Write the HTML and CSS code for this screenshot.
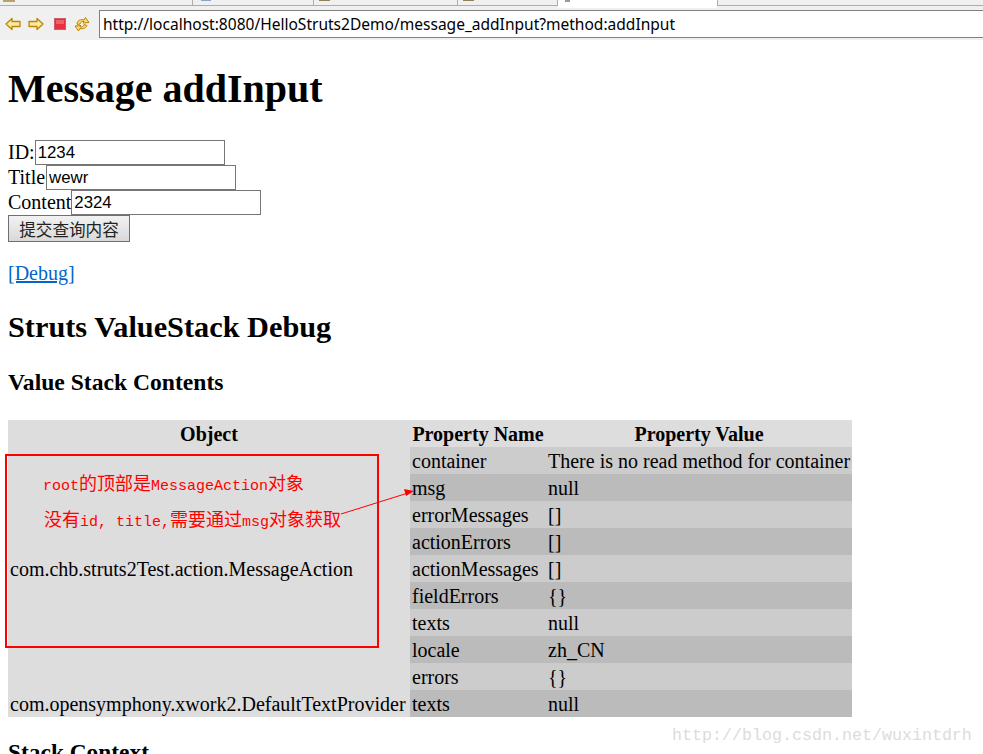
FILE: index.html
```html
<!DOCTYPE html>
<html lang="en">
<head>
<meta charset="utf-8">
<title>Message addInput</title>
<link rel="stylesheet" href="styles.css">
</head>
<body>
<header class="chrome">
  <div class="tabs">
    <div class="tab tab-a"><svg class="tab-icon" width="16" height="3" viewBox="0 0 16 3"><rect x="2" y="0" width="12" height="2" fill="#b8a46a"/></svg></div>
    <div class="tab tab-b"><svg class="tab-icon" width="16" height="3" viewBox="0 0 16 3"><rect x="6" y="0" width="10" height="1" fill="#8fa3c9"/></svg></div>
    <div class="tab tab-c"><svg class="tab-icon" width="16" height="3" viewBox="0 0 16 3"><rect x="3" y="0" width="11" height="1" fill="#8f8257"/></svg></div>
    <div class="tab tab-d"><svg class="tab-icon" width="16" height="3" viewBox="0 0 16 3"><rect x="3" y="0" width="11" height="1" fill="#8f8257"/></svg></div>
    <div class="tab tab-active"><svg class="tab-icon" width="16" height="3" viewBox="0 0 16 3"><rect x="6" y="0" width="5" height="2" fill="#999"/></svg></div>
    <div class="tab tab-rest"></div>
  </div>
  <div class="toolbar">
    <div class="nav-icons">
      <svg class="nav-back" width="16" height="14" viewBox="0 0 16 14"><path d="M1 7 7 1.500V4.500H15V9.500H7V12.500Z" fill="#fde9a0" stroke="#b8860b" stroke-width="1.300" stroke-linejoin="round"/></svg>
      <svg class="nav-forward" width="16" height="14" viewBox="0 0 16 14"><path d="M15 7 9 1.500V4.500H1V9.500H9V12.500Z" fill="#fde9a0" stroke="#b8860b" stroke-width="1.300" stroke-linejoin="round"/></svg>
      <svg class="nav-stop" width="12" height="12" viewBox="0 0 12 12"><rect x=".5" y=".5" width="11" height="11" fill="#e9303f" stroke="#c9606a"/><rect x="2" y="2" width="8" height="4" fill="#f0606b"/></svg>
      <svg class="nav-refresh" width="16" height="16" viewBox="0 0 16 16"><path d="M3 7C4 4 7 3 10 4L11.500 1.500 15 6.500 9 7 10 5.500C8 5 6.500 6 6 8L3.500 8.500Z" fill="#fbd970" stroke="#b8860b"/><path d="M13 9.500C12 12 9 13.500 6 12.500L4.500 15 1 10 7 9.500 6 11C8 11.500 9.500 10.500 10 8.500Z" fill="#fbd970" stroke="#b8860b"/></svg>
    </div>
    <div class="address">http://localhost:8080/HelloStruts2Demo/message_addInput?method:addInput</div>
  </div>
</header>
<main class="page">
  <h1>Message addInput</h1>
  <form class="form">
    <label class="field"><span>ID:</span><input class="input" type="text" value="1234"></label>
    <label class="field"><span class="label-title">Title</span><input class="input" type="text" value="wewr"></label>
    <label class="field"><span>Content</span><input class="input" type="text" value="2324"></label>
    <button class="submit" type="button">提交查询内容</button>
  </form>
  <p class="debug"><a href="#">[Debug]</a></p>
  <h2>Struts ValueStack Debug</h2>
  <h3 class="stack-title">Value Stack Contents</h3>
  <div class="stack">
    <table class="values">
      <thead>
        <tr><th class="col-object">Object</th><th class="col-name">Property Name</th><th class="col-value">Property Value</th></tr>
      </thead>
      <tbody>
        <tr class="odd"><td class="object" rowspan="9">com.chb.struts2Test.action.MessageAction</td><td>container</td><td>There is no read method for container</td></tr>
        <tr class="even"><td>msg</td><td>null</td></tr>
        <tr class="odd"><td>errorMessages</td><td>[]</td></tr>
        <tr class="even"><td>actionErrors</td><td>[]</td></tr>
        <tr class="odd"><td>actionMessages</td><td>[]</td></tr>
        <tr class="even"><td>fieldErrors</td><td>{}</td></tr>
        <tr class="odd"><td>texts</td><td>null</td></tr>
        <tr class="even"><td>locale</td><td>zh_CN</td></tr>
        <tr class="odd"><td>errors</td><td>{}</td></tr>
        <tr class="even"><td class="object">com.opensymphony.xwork2.DefaultTextProvider</td><td>texts</td><td>null</td></tr>
      </tbody>
    </table>
    <div class="note-box"></div>
    <p class="note note-one">root<span class="cjk">的顶部是</span>MessageAction<span class="cjk">对象</span></p>
    <p class="note note-two"><span class="cjk">没有</span>id, title,<span class="cjk">需要通过</span>msg<span class="cjk">对象获取</span></p>
    <svg class="note-arrow" width="80" height="30" viewBox="0 0 80 30"><path d="M1 28 68 7" stroke="#f00" stroke-width="1" fill="none"/><path d="M74 5 64 3 66 10Z" fill="#f00"/></svg>
  </div>
  <h3 class="context-title">Stack Context</h3>
</main>
<div class="watermark">http://blog.csdn.net/wuxintdrh</div>
</body>
</html>
```
FILE: styles.css
```css
html, body {
  margin: 0;
  height: 754px;
  overflow: hidden;
  background: #fff;
}
body {
  position: relative;
  font-family: "Liberation Serif", "Noto Sans CJK SC", serif;
  font-size: 20px;
  color: #000;
}
.chrome {
  height: 40px;
  background: #f0f0f0;
}
.tabs {
  display: flex;
  height: 6px;
}
.tab {
  box-sizing: border-box;
  height: 6px;
  border-bottom: 1px solid #adadad;
  border-right: 1px solid #adadad;
  overflow: hidden;
  position: relative;
}
.tab-icon { position: absolute; left: 1px; top: 0; }
.tab-a { width: 193px; }
.tab-b { width: 121px; }
.tab-c { width: 144px; }
.tab-d { width: 100px; }
.tab-b .tab-icon { left: 2px; }
.tab-c .tab-icon, .tab-d .tab-icon { left: 2px; }
.tab-active {
  width: 159px;
  height: 8px;
  background: #fff;
  border: 0;
}
.tab-rest {
  flex: 1;
  border-left: 1px solid #adadad;
  border-right: 0;
}
.toolbar {
  display: flex;
  height: 34px;
  box-sizing: border-box;
  padding-top: 4px;
}
.nav-icons {
  width: 99px;
  height: 28px;
  display: flex;
  align-items: center;
  padding-left: 5px;
  box-sizing: border-box;
}
.nav-forward { margin-left: 7px; }
.nav-stop { margin-left: 10px; }
.nav-refresh { margin-left: 8px; }
.address {
  flex: 1;
  height: 28px;
  box-sizing: border-box;
  background: #fff;
  border: 1px solid #808080;
  border-width: 1px 0 1px 1px;
  padding-left: 3px;
  font: 15.540px/26px "Noto Sans", sans-serif;
  color: #000;
  white-space: nowrap;
}
.page { padding: 0 8px; }
h1 {
  margin: 26px 0 28px;
  font-size: 40px;
  line-height: 46px;
}
.form { margin: 0; }
.field {
  display: flex;
  align-items: center;
  height: 25px;
  line-height: 23px;
}
.label-title { margin-right: 1px; }
.input {
  box-sizing: border-box;
  width: 190px;
  height: 25px;
  margin: 0;
  padding: 1px 2px;
  border: 1px solid #767676;
  font: 16.800px "Liberation Sans", sans-serif;
  background: #fff;
  color: #000;
}
.submit {
  display: block;
  box-sizing: border-box;
  width: 122px;
  height: 27px;
  margin: 0;
  padding: 0;
  border: 1px solid #707070;
  background: linear-gradient(#f2f2f2, #d9d9d9);
  font: 16.600px "Noto Sans CJK SC", sans-serif;
  color: #222;
}
.debug {
  margin: 20px 0 0;
  line-height: 23px;
}
.debug a { color: #0066cc; }
h2 {
  margin: 25px 0 0;
  font-size: 30.300px;
  line-height: 35px;
}
.stack-title {
  margin: 24px 0 0;
  font-size: 23.600px;
  line-height: 27px;
}
.stack {
  position: relative;
  width: 844px;
  margin-top: 24px;
}
.values {
  border-collapse: collapse;
  width: 844px;
  table-layout: fixed;
  background: #ddd;
}
.values th, .values td {
  box-sizing: border-box;
  padding: 3px 2px 1px;
  line-height: 23px;
  white-space: nowrap;
  font-weight: normal;
  text-align: left;
}
.values th { font-weight: bold; text-align: center; }
.col-object { width: 402px; }
.col-name { width: 136px; }
.odd td { background: #ccc; }
.even td { background: #bbb; }
.values td.object { background: #ddd; }
.note-box {
  position: absolute;
  left: -3px;
  top: 34px;
  width: 374px;
  height: 194px;
  box-sizing: border-box;
  border: 2px solid #f00;
}
.note {
  position: absolute;
  margin: 0;
  white-space: pre;
  color: #f00;
  font: 15px/22px "Liberation Mono", monospace;
}
.cjk { font: 18px/22px "Noto Sans CJK SC", sans-serif; }
.note-one { left: 35px; top: 51px; }
.note-two { left: 36px; top: 87px; }
.note-arrow { position: absolute; left: 332px; top: 66px; }
.context-title {
  margin: 22px 0 0;
  font-size: 23.400px;
  line-height: 27px;
}
.watermark {
  position: absolute;
  left: 672px;
  top: 726px;
  font: 16.670px/20px "Liberation Mono", monospace;
  color: #dcdcdc;
  white-space: nowrap;
}
```
